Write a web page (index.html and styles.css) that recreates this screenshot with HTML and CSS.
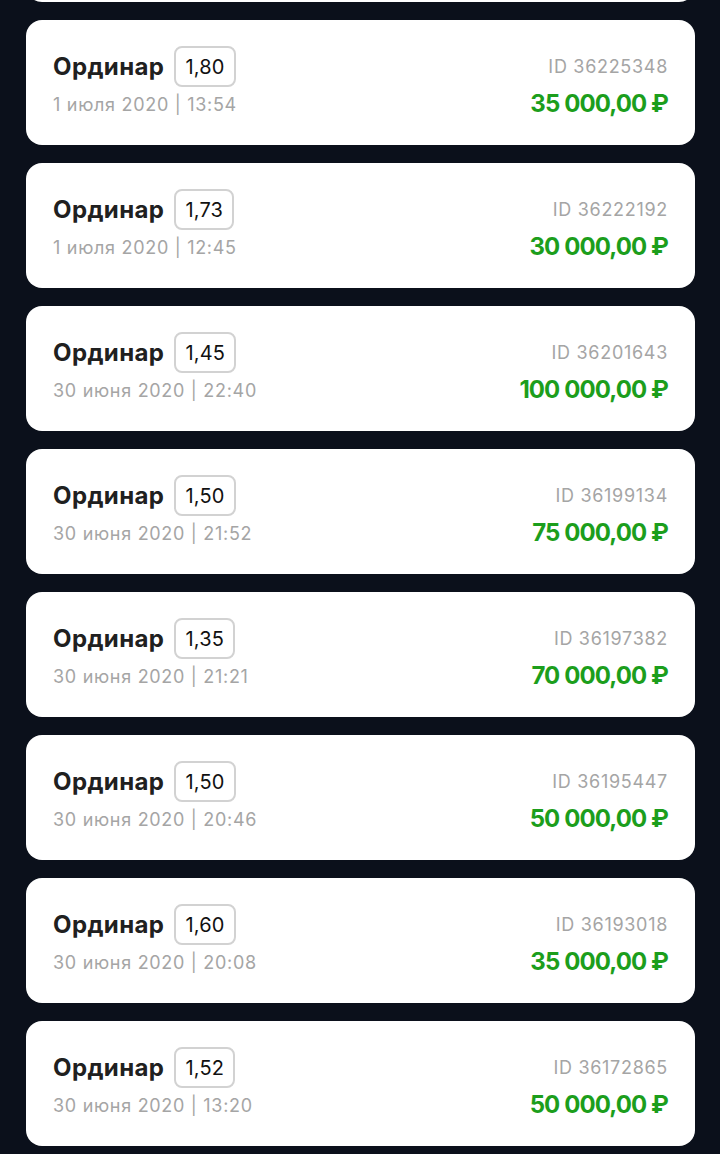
FILE: index.html
```html
<!DOCTYPE html>
<html lang="ru">
<head>
    <meta charset="UTF-8">
    <meta name="viewport" content="width=device-width, initial-scale=1.0">
    <title>История ставок</title>
    <link rel="stylesheet" href="styles.css">
</head>
<body>
    <div class="bets">
        <div class="bet bet-prev"></div>
        <div class="bet">
            <div class="bet-left">
                <div class="bet-head"><span class="bet-type">Ординар</span><span class="coef">1,80</span></div>
                <div class="bet-date">1 июля 2020 | 13:54</div>
            </div>
            <div class="bet-right">
                <div class="bet-id">ID 36225348</div>
                <div class="bet-sum">35 000,00 ₽</div>
            </div>
        </div>
        <div class="bet">
            <div class="bet-left">
                <div class="bet-head"><span class="bet-type">Ординар</span><span class="coef">1,73</span></div>
                <div class="bet-date">1 июля 2020 | 12:45</div>
            </div>
            <div class="bet-right">
                <div class="bet-id">ID 36222192</div>
                <div class="bet-sum">30 000,00 ₽</div>
            </div>
        </div>
        <div class="bet">
            <div class="bet-left">
                <div class="bet-head"><span class="bet-type">Ординар</span><span class="coef">1,45</span></div>
                <div class="bet-date">30 июня 2020 | 22:40</div>
            </div>
            <div class="bet-right">
                <div class="bet-id">ID 36201643</div>
                <div class="bet-sum">100 000,00 ₽</div>
            </div>
        </div>
        <div class="bet">
            <div class="bet-left">
                <div class="bet-head"><span class="bet-type">Ординар</span><span class="coef">1,50</span></div>
                <div class="bet-date">30 июня 2020 | 21:52</div>
            </div>
            <div class="bet-right">
                <div class="bet-id">ID 36199134</div>
                <div class="bet-sum">75 000,00 ₽</div>
            </div>
        </div>
        <div class="bet">
            <div class="bet-left">
                <div class="bet-head"><span class="bet-type">Ординар</span><span class="coef">1,35</span></div>
                <div class="bet-date">30 июня 2020 | 21:21</div>
            </div>
            <div class="bet-right">
                <div class="bet-id">ID 36197382</div>
                <div class="bet-sum">70 000,00 ₽</div>
            </div>
        </div>
        <div class="bet">
            <div class="bet-left">
                <div class="bet-head"><span class="bet-type">Ординар</span><span class="coef">1,50</span></div>
                <div class="bet-date">30 июня 2020 | 20:46</div>
            </div>
            <div class="bet-right">
                <div class="bet-id">ID 36195447</div>
                <div class="bet-sum">50 000,00 ₽</div>
            </div>
        </div>
        <div class="bet">
            <div class="bet-left">
                <div class="bet-head"><span class="bet-type">Ординар</span><span class="coef">1,60</span></div>
                <div class="bet-date">30 июня 2020 | 20:08</div>
            </div>
            <div class="bet-right">
                <div class="bet-id">ID 36193018</div>
                <div class="bet-sum">35 000,00 ₽</div>
            </div>
        </div>
        <div class="bet">
            <div class="bet-left">
                <div class="bet-head"><span class="bet-type">Ординар</span><span class="coef">1,52</span></div>
                <div class="bet-date">30 июня 2020 | 13:20</div>
            </div>
            <div class="bet-right">
                <div class="bet-id">ID 36172865</div>
                <div class="bet-sum">50 000,00 ₽</div>
            </div>
        </div>
    </div>
</body>
</html>
```

FILE: styles.css
```css
body {
    font-family: Inter, Roboto, "Noto Sans", sans-serif;
    margin: 0;
    background-color: #0b101b;
    overflow: hidden;
    height: 1154px;
}
.bets {
    display: flex;
    flex-direction: column;
    gap: 18px;
    padding: 0 25px 0 26px;
    margin-top: -123px;
}
.bet {
    background-color: white;
    border-radius: 16px;
    height: 125px;
    flex-shrink: 0;
    box-sizing: border-box;
    padding: 26px 27px 0 27px;
    display: flex;
    justify-content: space-between;
}
.bet-head {
    display: flex;
    align-items: center;
    gap: 10px;
    height: 41px;
}
.bet-type {
    font-size: 24px;
    font-weight: 700;
    letter-spacing: 0.4px;
    color: #202020;
}
.coef {
    border: 2px solid #d2d2d2;
    border-radius: 8px;
    height: 41px;
    box-sizing: border-box;
    padding: 0 9px;
    display: flex;
    align-items: center;
    font-size: 20px;
    letter-spacing: 0.2px;
    color: #111;
}
.bet-date {
    margin-top: 6px;
    font-size: 18px;
    line-height: 24px;
    letter-spacing: 0.7px;
    color: #a5a5a5;
}
.bet-right {
    display: flex;
    flex-direction: column;
    align-items: flex-end;
}
.bet-id {
    height: 41px;
    display: flex;
    align-items: center;
    font-size: 18px;
    letter-spacing: 0.7px;
    color: #a5a5a5;
}
.bet-sum {
    margin-top: 2px;
    font-size: 24px;
    line-height: 30px;
    font-weight: 700;
    color: #1c9e1c;
    letter-spacing: -0.9px;
}
```
